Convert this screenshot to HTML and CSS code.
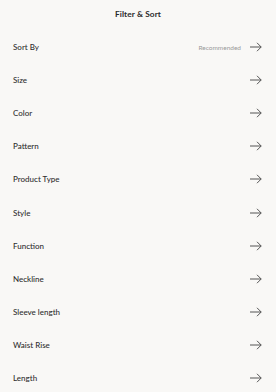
FILE: index.html
```html
<!DOCTYPE html>
<html>
<head>
<meta charset="utf-8">
<link rel="stylesheet" href="styles.css">
</head>
<body>
<div class="panel">
  <header class="head"><h1 class="title">Filter &amp; Sort</h1></header>
  <ul class="list">
    <li class="row"><span class="label">Sort By</span><span class="right"><span class="value">Recommended</span><svg class="arrow" viewBox="0 0 12 10"><path d="M0 5H11.2M7 0.8L11.2 5L7 9.2"/></svg></span></li>
    <li class="row"><span class="label">Size</span><span class="right"><svg class="arrow" viewBox="0 0 12 10"><path d="M0 5H11.2M7 0.8L11.2 5L7 9.2"/></svg></span></li>
    <li class="row"><span class="label">Color</span><span class="right"><svg class="arrow" viewBox="0 0 12 10"><path d="M0 5H11.2M7 0.8L11.2 5L7 9.2"/></svg></span></li>
    <li class="row"><span class="label">Pattern</span><span class="right"><svg class="arrow" viewBox="0 0 12 10"><path d="M0 5H11.2M7 0.8L11.2 5L7 9.2"/></svg></span></li>
    <li class="row"><span class="label">Product Type</span><span class="right"><svg class="arrow" viewBox="0 0 12 10"><path d="M0 5H11.2M7 0.8L11.2 5L7 9.2"/></svg></span></li>
    <li class="row"><span class="label">Style</span><span class="right"><svg class="arrow" viewBox="0 0 12 10"><path d="M0 5H11.2M7 0.8L11.2 5L7 9.2"/></svg></span></li>
    <li class="row"><span class="label">Function</span><span class="right"><svg class="arrow" viewBox="0 0 12 10"><path d="M0 5H11.2M7 0.8L11.2 5L7 9.2"/></svg></span></li>
    <li class="row"><span class="label">Neckline</span><span class="right"><svg class="arrow" viewBox="0 0 12 10"><path d="M0 5H11.2M7 0.8L11.2 5L7 9.2"/></svg></span></li>
    <li class="row"><span class="label">Sleeve length</span><span class="right"><svg class="arrow" viewBox="0 0 12 10"><path d="M0 5H11.2M7 0.8L11.2 5L7 9.2"/></svg></span></li>
    <li class="row"><span class="label">Waist Rise</span><span class="right"><svg class="arrow" viewBox="0 0 12 10"><path d="M0 5H11.2M7 0.8L11.2 5L7 9.2"/></svg></span></li>
    <li class="row"><span class="label">Length</span><span class="right"><svg class="arrow" viewBox="0 0 12 10"><path d="M0 5H11.2M7 0.8L11.2 5L7 9.2"/></svg></span></li>
  </ul>
</div>
</body>
</html>
```
FILE: styles.css
```css
html, body {
  margin: 0;
  padding: 0;
  background: #f9f8f6;
}
body {
  font-family: Lato, "Noto Sans", sans-serif;
  color: #333;
  width: 276px;
  height: 392px;
  overflow: hidden;
}
.head {
  height: 30.5px;
  display: flex;
  align-items: center;
  justify-content: center;
  padding-bottom: 3px;
  box-sizing: border-box;
}
.title {
  margin: 0;
  font-size: 8.3px;
  font-weight: 700;
  color: #2a2a2a;
  letter-spacing: 0.1px;
}
.list {
  list-style: none;
  margin: 0;
  padding: 0;
}
.row {
  height: 33.1px;
  display: flex;
  align-items: center;
  justify-content: space-between;
  padding: 0 14px 0 13px;
}
.label {
  font-size: 8px;
  font-weight: 500;
  color: #2f2f2f;
}
.right {
  display: flex;
  align-items: center;
  gap: 9px;
}
.value {
  font-size: 6.5px;
  color: #9a9a9a;
}
.arrow {
  width: 12px;
  height: 10px;
  fill: none;
  stroke: #555;
  stroke-width: 1;
}
```
